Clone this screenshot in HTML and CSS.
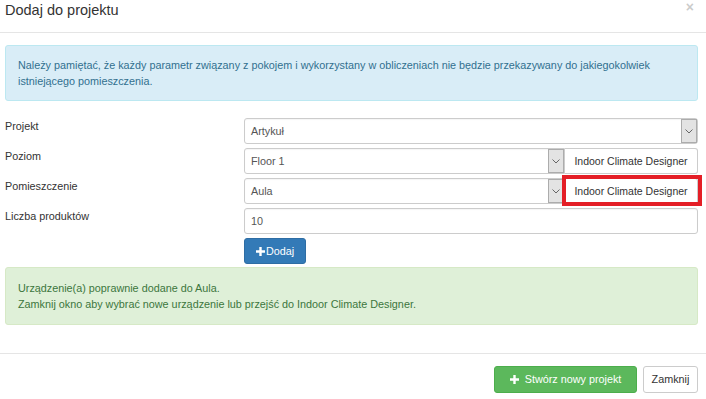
FILE: index.html
```html
<!DOCTYPE html>
<html lang="pl">
<head>
<meta charset="utf-8">
<title>Dodaj do projektu</title>
<link rel="stylesheet" href="styles.css">
</head>
<body>
<div class="modal">
  <div class="modal-header">
    <h4 class="modal-title">Dodaj do projektu</h4>
    <span class="close">×</span>
  </div>
  <div class="modal-body">
    <div class="alert alert-info">Należy pamiętać, że każdy parametr związany z pokojem i wykorzystany w obliczeniach nie będzie przekazywany do jakiegokolwiek istniejącego pomieszczenia.</div>
    <div class="form">
      <label class="label">Projekt</label>
      <div class="control">
        <div class="select select-full"><span class="value">Artykuł</span><span class="arrow"><svg width="8" height="5" viewBox="0 0 8 5"><path d="M0.5 0.5 L4 4 L7.5 0.5" fill="none" stroke="#666" stroke-width="1"/></svg></span></div>
      </div>

      <label class="label">Poziom</label>
      <div class="control input-group">
        <div class="select"><span class="value">Floor 1</span><span class="arrow"><svg width="8" height="5" viewBox="0 0 8 5"><path d="M0.5 0.5 L4 4 L7.5 0.5" fill="none" stroke="#666" stroke-width="1"/></svg></span></div>
        <span class="group-btn"><button class="btn btn-default btn-addon">Indoor Climate Designer</button></span>
      </div>

      <label class="label">Pomieszczenie</label>
      <div class="control input-group">
        <div class="select"><span class="value">Aula</span><span class="arrow"><svg width="8" height="5" viewBox="0 0 8 5"><path d="M0.5 0.5 L4 4 L7.5 0.5" fill="none" stroke="#666" stroke-width="1"/></svg></span></div>
        <span class="group-btn highlighted"><button class="btn btn-default btn-addon">Indoor Climate Designer</button><span class="mark"></span></span>
      </div>

      <label class="label">Liczba produktów</label>
      <div class="control">
        <div class="input">10</div>
      </div>

      <span></span>
      <div class="control">
        <button class="btn btn-primary btn-dodaj"><svg class="plus" width="9" height="9" viewBox="0 0 9 9"><path d="M3.3 0 H5.7 V3.3 H9 V5.7 H5.7 V9 H3.3 V5.7 H0 V3.3 H3.3 Z" fill="#fff"/></svg>Dodaj</button>
      </div>
    </div>
    <div class="alert alert-success">Urządzenie(a) poprawnie dodane do Aula.<br>Zamknij okno aby wybrać nowe urządzenie lub przejść do Indoor Climate Designer.</div>
  </div>
  <div class="modal-footer">
    <button class="btn btn-success"><svg class="plus" width="9" height="9" viewBox="0 0 9 9"><path d="M3.3 0 H5.7 V3.3 H9 V5.7 H5.7 V9 H3.3 V5.7 H0 V3.3 H3.3 Z" fill="#fff"/></svg>Stwórz nowy projekt</button>
    <button class="btn btn-default">Zamknij</button>
  </div>
</div>
</body>
</html>
```
FILE: styles.css
```css
* { box-sizing: border-box; }
html, body { margin: 0; padding: 0; background: #fff; }
body {
  font-family: "Liberation Sans", Arial, sans-serif;
  font-size: 10.8px;
  line-height: 16px;
  color: #333;
  width: 706px;
  height: 399px;
  overflow: hidden;
}
.modal-header {
  height: 33px;
  border-bottom: 1px solid #e5e5e5;
  padding: 0 12px 0 5px;
  display: flex;
  justify-content: space-between;
  align-items: flex-start;
}
.modal-title {
  margin: 2px 0 0;
  font-size: 14.5px;
  line-height: 16px;
  font-weight: normal;
  color: #333;
}
.close {
  font-size: 14px;
  font-weight: bold;
  line-height: 14px;
  color: #000;
  opacity: 0.2;
  margin-top: 0;
}
.modal-body {
  padding: 12px 8px 28px 5px;
}
.alert {
  border: 1px solid transparent;
  border-radius: 3px;
}
.alert-info {
  background: #d9edf7;
  border-color: #bce8f1;
  color: #31708f;
  padding: 11px 12px;
}
.alert-success {
  background: #dff0d8;
  border-color: #d6e9c6;
  color: #3c763d;
  padding: 12px 12px;
  margin-top: 3px;
}
.form {
  display: grid;
  grid-template-columns: 239px 1fr;
  row-gap: 4px;
  margin-top: 17px;
}
.label {
  line-height: 16px;
  color: #333;
}
.control { display: flex; }
.input-group { position: relative; }
.select, .input {
  height: 26px;
  border: 1px solid #ccc;
  border-radius: 3px;
  background: #fff;
  color: #555;
  display: flex;
  align-items: center;
  justify-content: space-between;
  padding: 0 0 0 6px;
  flex: 1;
  box-shadow: inset 0 1px 1px rgba(0,0,0,0.04);
  white-space: nowrap;
}
.input-group .select {
  border-radius: 3px 0 0 3px;
}
.arrow {
  width: 16px;
  height: 24px;
  background: #e3e3e3;
  border: 1px solid #acacac;
  display: flex;
  align-items: center;
  justify-content: center;
}
.group-btn {
  position: relative;
  display: flex;
}
.btn {
  font-family: "Liberation Sans", Arial, sans-serif;
  font-size: 10.8px;
  line-height: 15px;
  height: 27px;
  border: 1px solid transparent;
  border-radius: 3px;
  padding: 0 9px;
  display: inline-flex;
  align-items: center;
  justify-content: center;
  white-space: nowrap;
  cursor: pointer;
}
.btn-default {
  background: #fff;
  border-color: #ccc;
  color: #333;
}
.btn-addon {
  height: 26px;
  width: 133px;
  border-radius: 0 3px 3px 0;
  border-left: none;
  padding: 0;
  font-size: 10.5px;
}
.mark {
  position: absolute;
  left: -3px;
  top: -3px;
  right: -4px;
  bottom: -2px;
  border: 4px solid #e41e26;
  pointer-events: none;
}
.btn-primary {
  background: #337ab7;
  border-color: #2e6da4;
  color: #fff;
}
.btn-dodaj {
  width: 62px;
  height: 26px;
  padding: 0;
}
.btn-dodaj .plus { margin-right: 1px; }
.btn-success {
  background: #5cb85c;
  border-color: #4cae4c;
  color: #fff;
  width: 143px;
}
.btn-success .plus { margin-right: 6px; }
.modal-footer {
  border-top: 1px solid #e5e5e5;
  padding: 12px 8px 0 5px;
  display: flex;
  justify-content: flex-end;
  gap: 6px;
}
.modal-footer .btn-default { width: 55px; }
```
